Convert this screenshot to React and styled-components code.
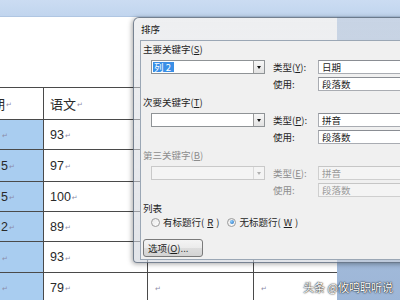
import React from "react";
import styled, { createGlobalStyle } from "styled-components";

const Global = createGlobalStyle`
  html, body { margin: 0; padding: 0; width: 400px; height: 300px; overflow: hidden; background: #fff; }
  #root { width: 400px; height: 300px; }
  * { box-sizing: border-box; }
`;

const Screen = styled.div`
  position: relative;
  width: 400px;
  height: 300px;
  overflow: hidden;
  display: flex;
  flex-direction: column;
  font-family: "Noto Sans CJK SC", "Liberation Sans", sans-serif;
`;

const Ribbon = styled.div`
  flex: none;
  height: 17px;
  background: linear-gradient(#cbdcf2, #c1d5ee);
  border-bottom: 1px solid #b0c6e2;
`;

const Workspace = styled.div`
  flex: 1;
  display: flex;
  background: linear-gradient(#b3c9e6, #9db6d7);
`;

const Page = styled.div`
  width: 337px;
  background: #fff;
  padding-top: 70px;
`;

const Table = styled.div`
  display: grid;
  grid-template-columns: 44px 104px 106px 83px;
  grid-template-rows: 32px 30px 32px 30px 30px 31px 30px;
  border-top: 1px solid #4a4a4a;
`;

const Cell = styled.div`
  display: flex;
  align-items: center;
  overflow: hidden;
  white-space: nowrap;
  padding-left: ${(p) => (p.$first ? "1px" : "6px")};
  border-bottom: 1px solid #4a4a4a;
  border-right: ${(p) => (p.$last ? "none" : "1px solid #4a4a4a")};
  background: ${(p) => (p.$shade ? "#a9cdf0" : "#fff")};
  color: #2a2a2a;
  font-size: ${(p) => (p.$cjk ? "13px" : "12.5px")};
  font-family: ${(p) =>
    p.$cjk ? '"Noto Sans CJK SC", sans-serif' : '"Liberation Sans", "Noto Sans CJK SC", sans-serif'};
`;

const Clip = styled.span`
  flex: none;
  margin-left: -22px;
`;

const Mark = styled.span`
  font-family: "DejaVu Sans", sans-serif;
  font-size: 7px;
  color: #8c8ca8;
  margin-left: 1px;
  margin-top: 3px;
`;

const Dialog = styled.div`
  position: absolute;
  left: 133px;
  top: 17px;
  width: 290px;
  height: 246px;
  border: 1px solid rgba(70, 85, 105, 0.7);
  border-radius: 6px 6px 4px 4px;
  background: linear-gradient(rgba(222, 224, 228, 0.5), rgba(208, 212, 220, 0.62));
  box-shadow: -1px 1px 5px rgba(0, 0, 0, 0.35);
  padding: 0 0 2px 6px;
  display: flex;
  flex-direction: column;
`;

const TitleBar = styled.div`
  flex: none;
  height: 22px;
  display: flex;
  align-items: center;
  padding-left: 1px;
  font-size: 9.5px;
  color: #1a1a1a;
`;

const Client = styled.div`
  flex: 1;
  background: #f0f0f0;
  border: 1px solid #9ba7b5;
  border-right: none;
  padding: 1px 0 0 2px;
  display: flex;
  flex-direction: column;
  font-size: 9.5px;
  color: #1e1e1e;
`;

const Section = styled.div`
  display: flex;
  flex-direction: column;
  gap: 4px;
  margin-bottom: 4px;
`;

const GroupLabel = styled.div`
  height: 14px;
  line-height: 14px;
  color: ${(p) => (p.$disabled ? "#8d8d8d" : "#1e1e1e")};
`;

const KeyRow = styled.div`
  display: flex;
  align-items: flex-start;
  padding-left: 8px;
  gap: 8px;
`;

const Combo = styled.div`
  width: 114px;
  height: 14px;
  display: flex;
  align-items: center;
  background: ${(p) => (p.$disabled ? "#f4f4f4" : "#fff")};
  border: 1px solid ${(p) => (p.$disabled ? "#c9c9c9" : "#8f9396")};
  padding-left: 1px;
`;

const ComboText = styled.div`
  flex: 1;
  height: 10px;
  display: flex;
  align-items: center;
`;

const Selected = styled.span`
  background: #3a8fe6;
  color: #fff;
  padding: 0 2px 0 1px;
  width: 21px;
  height: 10px;
  line-height: 10px;
  font-size: 9.5px;
`;

const DropBtn = styled.div`
  width: 11px;
  height: 12px;
  display: flex;
  align-items: center;
  justify-content: center;
  background: ${(p) => (p.$disabled ? "#f4f4f4" : "linear-gradient(#f7f7f7, #e2e2e2)")};
  border-left: 1px solid ${(p) => (p.$disabled ? "#dadada" : "#9a9a9a")};
`;

const Arrow = styled.span`
  width: 0;
  height: 0;
  border-left: 2.5px solid transparent;
  border-right: 2.5px solid transparent;
  border-top: 3px solid ${(p) => (p.$disabled ? "#b0b0b0" : "#111")};
`;

const Fields = styled.div`
  display: grid;
  grid-template-columns: 45px 100px;
  grid-auto-rows: 14px;
  row-gap: 3px;
`;

const FieldLabel = styled.div`
  line-height: 14px;
  color: ${(p) => (p.$disabled ? "#8d8d8d" : "#1e1e1e")};
`;

const TextBox = styled.div`
  height: 14px;
  line-height: 12px;
  padding-left: 3px;
  background: ${(p) => (p.$disabled ? "#f4f4f4" : "#fff")};
  border: 1px solid ${(p) => (p.$disabled ? "#cfcfcf" : "#a9acb2")};
  border-top-color: ${(p) => (p.$disabled ? "#c6c6c6" : "#8a8d93")};
  border-right: none;
  color: ${(p) => (p.$disabled ? "#9a9a9a" : "#1e1e1e")};
`;

const RadioRow = styled.div`
  height: 14px;
  display: flex;
  align-items: center;
  padding-left: 8px;
  gap: 8px;
`;

const RadioItem = styled.label`
  display: flex;
  align-items: center;
  gap: 3px;
  line-height: 14px;
`;

const RadioCircle = styled.span`
  width: 9px;
  height: 9px;
  border-radius: 50%;
  border: 1px solid #9b9b9b;
  background: linear-gradient(135deg, #e8e8e8, #fdfdfd);
  display: flex;
  align-items: center;
  justify-content: center;
  &::after {
    content: "";
    display: ${(p) => (p.$checked ? "block" : "none")};
    width: 4px;
    height: 4px;
    border-radius: 50%;
    background: radial-gradient(circle at 35% 35%, #8fd0ff, #1b66b8);
  }
`;

const Button = styled.div`
  margin-top: 10px;
  width: 60px;
  height: 18px;
  display: flex;
  align-items: center;
  padding-left: 4px;
  border: 1px solid #7a7a7a;
  border-radius: 3px;
  background: linear-gradient(#f4f4f4 0%, #ebebeb 50%, #dddddd 51%, #d3d3d3 100%);
  color: #1e1e1e;
`;

const Watermark = styled.div`
  position: absolute;
  right: 7px;
  bottom: 5px;
  font-size: 11px;
  color: #fff;
  text-shadow: 0 0 2px rgba(0, 0, 0, 0.9), 0 0 1px rgba(0, 0, 0, 0.9);
  font-family: "Noto Sans CJK SC", sans-serif;
`;

const rows = [
  ["", "93"],
  ["5", "97"],
  ["5", "100"],
  ["2", "89"],
  ["", "93"],
  ["", "79"],
];

const keys = [
  { label: "主要关键字", acc: "S", sel: "列 2", tacc: "Y", type: "日期", use: "段落数" },
  { label: "次要关键字", acc: "T", sel: "", tacc: "P", type: "拼音", use: "段落数" },
  { label: "第三关键字", acc: "B", sel: "", tacc: "E", type: "拼音", use: "段落数", disabled: true },
];

export default function App() {
  return (
    <>
      <Global />
      <Screen>
        <Ribbon />
        <Workspace>
          <Page>
            <Table>
              <Cell $first $cjk>
                <Clip>日期</Clip>
                <Mark>↵</Mark>
              </Cell>
              <Cell $cjk>
                语文<Mark>↵</Mark>
              </Cell>
              <Cell $cjk />
              <Cell $cjk $last />
              {rows.map(([a, b], i) => {
                const visible = i === rows.length - 1;
                return (
                  <React.Fragment key={i}>
                    <Cell $first $shade>
                      {a}
                      <Mark>↵</Mark>
                    </Cell>
                    <Cell>
                      {b}
                      <Mark>↵</Mark>
                    </Cell>
                    <Cell>{visible && <Mark>↵</Mark>}</Cell>
                    <Cell $last>{visible && <Mark>↵</Mark>}</Cell>
                  </React.Fragment>
                );
              })}
            </Table>
          </Page>
        </Workspace>

        <Dialog>
          <TitleBar>排序</TitleBar>
          <Client>
            {keys.map((k) => (
              <Section key={k.label}>
                <GroupLabel $disabled={k.disabled}>
                  {k.label}(<u>{k.acc}</u>)
                </GroupLabel>
                <KeyRow>
                  <Combo $disabled={k.disabled}>
                    <ComboText>{k.sel && <Selected>{k.sel}</Selected>}</ComboText>
                    <DropBtn $disabled={k.disabled}>
                      <Arrow $disabled={k.disabled} />
                    </DropBtn>
                  </Combo>
                  <Fields>
                    <FieldLabel $disabled={k.disabled}>
                      类型(<u>{k.tacc}</u>):
                    </FieldLabel>
                    <TextBox $disabled={k.disabled}>{k.type}</TextBox>
                    <FieldLabel $disabled={k.disabled}>使用:</FieldLabel>
                    <TextBox $disabled={k.disabled}>{k.use}</TextBox>
                  </Fields>
                </KeyRow>
              </Section>
            ))}
            <GroupLabel>列表</GroupLabel>
            <RadioRow>
              <RadioItem>
                <RadioCircle />
                有标题行(<u>R</u>)
              </RadioItem>
              <RadioItem>
                <RadioCircle $checked />
                无标题行(<u>W</u>)
              </RadioItem>
            </RadioRow>
            <Button>
              选项(<u>O</u>)...
            </Button>
          </Client>
        </Dialog>

        <Watermark>头条 @攸鸣职听说</Watermark>
      </Screen>
    </>
  );
}
